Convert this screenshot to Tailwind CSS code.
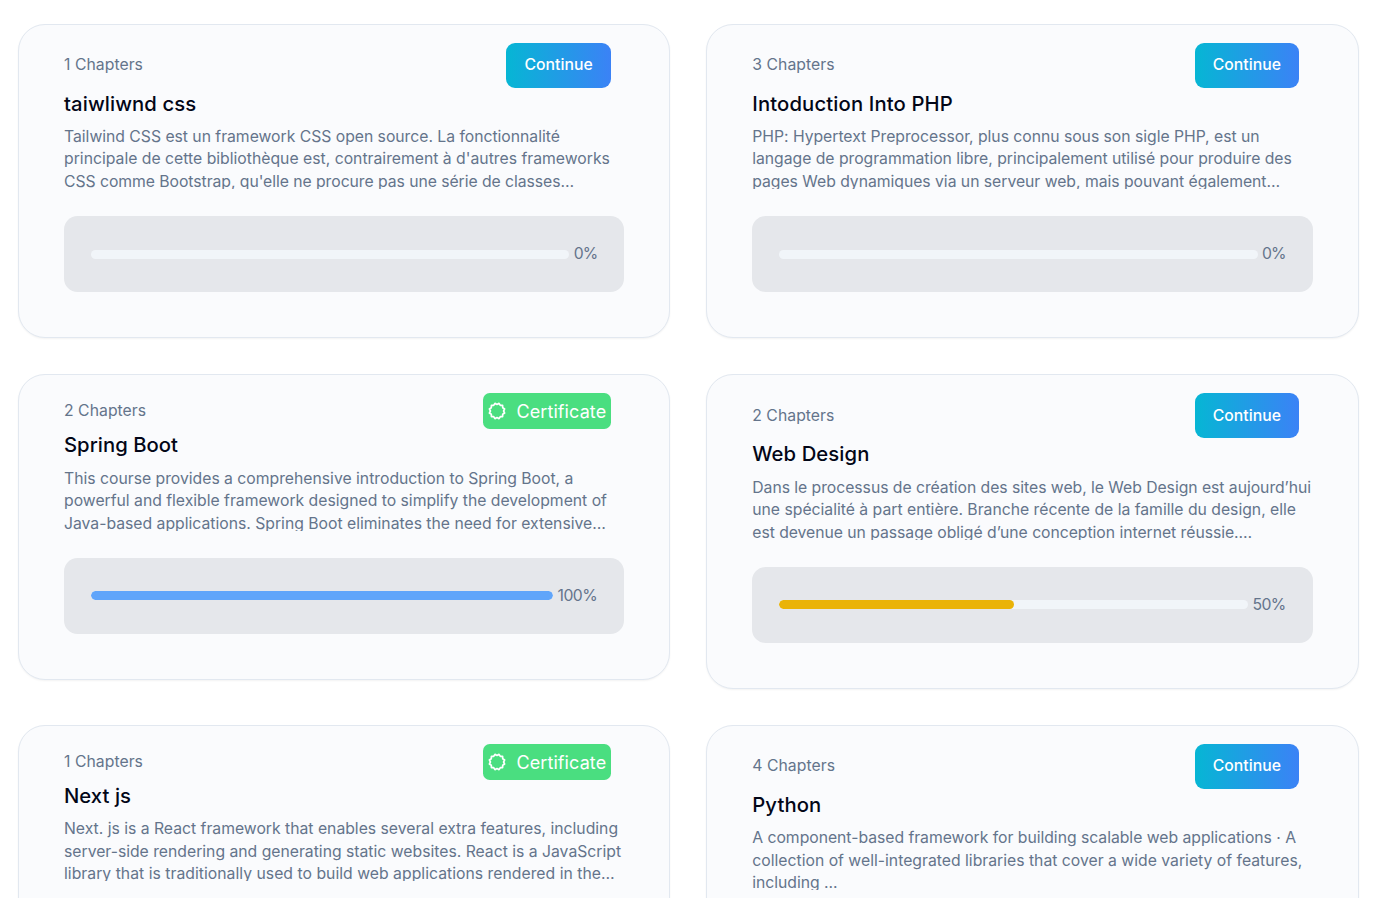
<!DOCTYPE html>
<html lang="en" class="text-[18px]">
<head>
<meta charset="utf-8">
<title>Courses</title>
<script src="https://cdn.jsdelivr.net/npm/@tailwindcss/browser@4"></script>
</head>
<body class="bg-white font-['Inter',sans-serif] overflow-hidden h-screen">
<main class="grid grid-cols-2 items-start gap-[36px] pl-[18px] pt-[23.6px] w-[1358.5px]">

  <article class="rounded-3xl border border-[#e2e8f0] bg-[#fafbfd] px-10 pt-4 pb-10 shadow-[0_1px_2px_rgba(0,0,0,0.05)]">
    <div class="flex items-center justify-between pr-3">
      <span class="text-sm leading-5 tracking-[0.04px] text-[#64748b]">1 Chapters</span>
      <button class="rounded-lg bg-linear-to-r/srgb from-[#06b6d4] to-[#3b82f6] px-4 py-2.5 text-sm leading-5 font-medium tracking-[0.03px] text-white">Continue</button>
    </div>
    <h2 class="text-lg leading-7 font-medium tracking-[0.1px] text-[#020617]">taiwliwnd css</h2>
    <p class="mt-1.5 mb-6 h-14 overflow-hidden text-sm leading-5 tracking-[-0.025px] text-[#64748b] whitespace-nowrap">Tailwind CSS est un framework CSS open source. La fonctionnalité<br><span class="tracking-[0px]">principale de cette bibliothèque est, contrairement à d'autres frameworks</span><br><span class="tracking-[-0.05px]">CSS comme Bootstrap, qu'elle ne procure pas une série de classes…</span></p>
    <div class="flex items-center gap-1 rounded-xl bg-[#e5e7eb] p-6">
      <div class="h-2 grow overflow-hidden rounded-full bg-[#f1f5f9]"></div>
      <span class="text-sm leading-5 tracking-[-1px] text-[#64748b]">0%</span>
    </div>
  </article>

  <article class="rounded-3xl border border-[#e2e8f0] bg-[#fafbfd] px-10 pt-4 pb-10 shadow-[0_1px_2px_rgba(0,0,0,0.05)]">
    <div class="flex items-center justify-between pr-3">
      <span class="text-sm leading-5 tracking-[0.04px] text-[#64748b]">3 Chapters</span>
      <button class="rounded-lg bg-linear-to-r/srgb from-[#06b6d4] to-[#3b82f6] px-4 py-2.5 text-sm leading-5 font-medium tracking-[0.03px] text-white">Continue</button>
    </div>
    <h2 class="text-lg leading-7 font-medium tracking-[0.14px] text-[#020617]">Intoduction Into PHP</h2>
    <p class="mt-1.5 mb-6 h-14 overflow-hidden text-sm leading-5 tracking-[-0.03px] text-[#64748b] whitespace-nowrap">PHP: Hypertext Preprocessor, plus connu sous son sigle PHP, est un<br>langage de programmation libre, principalement utilisé pour produire des<br>pages Web dynamiques via un serveur web, mais pouvant également…</p>
    <div class="flex items-center gap-1 rounded-xl bg-[#e5e7eb] p-6">
      <div class="h-2 grow overflow-hidden rounded-full bg-[#f1f5f9]"></div>
      <span class="text-sm leading-5 tracking-[-1px] text-[#64748b]">0%</span>
    </div>
  </article>

  <article class="rounded-3xl border border-[#e2e8f0] bg-[#fafbfd] px-10 pt-4 pb-10 shadow-[0_1px_2px_rgba(0,0,0,0.05)]">
    <div class="flex items-center justify-between pr-3">
      <span class="text-sm leading-5 tracking-[0.04px] text-[#64748b]">2 Chapters</span>
      <button class="flex items-center gap-2 rounded-md bg-[#4ade80] p-1 text-base leading-6 tracking-[0.1px] text-white">
        <svg class="size-[20px] shrink-0" viewBox="0 0 20 20" fill="none" stroke="currentColor" stroke-width="1.7" stroke-linejoin="round"><path d="M10 3.4 12.04 2.37 13.3 4.28 15.59 4.41 15.72 6.7 17.63 7.96 16.6 10 17.63 12.04 15.72 13.3 15.59 15.59 13.3 15.72 12.04 17.63 10 16.6 7.96 17.63 6.7 15.72 4.41 15.59 4.28 13.3 2.37 12.04 3.4 10 2.37 7.96 4.28 6.7 4.41 4.41 6.7 4.28 7.96 2.37Z"/></svg>
        <span>Certificate</span>
      </button>
    </div>
    <h2 class="text-lg leading-7 font-medium tracking-[0.04px] text-[#020617]">Spring Boot</h2>
    <p class="mt-1.5 mb-6 h-14 overflow-hidden text-sm leading-5 tracking-[-0.01px] text-[#64748b] whitespace-nowrap">This course provides a comprehensive introduction to Spring Boot, a<br>powerful and flexible framework designed to simplify the development of<br>Java-based applications. Spring Boot eliminates the need for extensive…</p>
    <div class="flex items-center gap-1 rounded-xl bg-[#e5e7eb] p-6">
      <div class="h-2 grow overflow-hidden rounded-full bg-[#f1f5f9]"><div class="h-full rounded-full bg-[#60a5fa]" style="width:100%"></div></div>
      <span class="text-sm leading-5 tracking-[-0.5px] text-[#64748b]">100%</span>
    </div>
  </article>

  <article class="rounded-3xl border border-[#e2e8f0] bg-[#fafbfd] px-10 pt-4 pb-10 shadow-[0_1px_2px_rgba(0,0,0,0.05)]">
    <div class="flex items-center justify-between pr-3">
      <span class="text-sm leading-5 tracking-[0.04px] text-[#64748b]">2 Chapters</span>
      <button class="rounded-lg bg-linear-to-r/srgb from-[#06b6d4] to-[#3b82f6] px-4 py-2.5 text-sm leading-5 font-medium tracking-[0.03px] text-white">Continue</button>
    </div>
    <h2 class="text-lg leading-7 font-medium tracking-[0.08px] text-[#020617]">Web Design</h2>
    <p class="mt-1.5 mb-6 h-14 overflow-hidden text-sm leading-5 tracking-[-0.04px] text-[#64748b] whitespace-nowrap">Dans le processus de création des sites web, le Web Design est aujourd’hui<br><span class="tracking-[-0.01px]">une spécialité à part entière. Branche récente de la famille du design, elle</span><br>est devenue un passage obligé d’une conception internet réussie.…</p>
    <div class="flex items-center gap-1 rounded-xl bg-[#e5e7eb] p-6">
      <div class="h-2 grow overflow-hidden rounded-full bg-[#f1f5f9]"><div class="h-full rounded-full bg-[#eab308]" style="width:50%"></div></div>
      <span class="text-sm leading-5 tracking-[-0.7px] text-[#64748b]">50%</span>
    </div>
  </article>

  <article class="rounded-3xl border border-[#e2e8f0] bg-[#fafbfd] px-10 pt-4 pb-10 shadow-[0_1px_2px_rgba(0,0,0,0.05)]">
    <div class="flex items-center justify-between pr-3">
      <span class="text-sm leading-5 tracking-[0.04px] text-[#64748b]">1 Chapters</span>
      <button class="flex items-center gap-2 rounded-md bg-[#4ade80] p-1 text-base leading-6 tracking-[0.1px] text-white">
        <svg class="size-[20px] shrink-0" viewBox="0 0 20 20" fill="none" stroke="currentColor" stroke-width="1.7" stroke-linejoin="round"><path d="M10 3.4 12.04 2.37 13.3 4.28 15.59 4.41 15.72 6.7 17.63 7.96 16.6 10 17.63 12.04 15.72 13.3 15.59 15.59 13.3 15.72 12.04 17.63 10 16.6 7.96 17.63 6.7 15.72 4.41 15.59 4.28 13.3 2.37 12.04 3.4 10 2.37 7.96 4.28 6.7 4.41 4.41 6.7 4.28 7.96 2.37Z"/></svg>
        <span>Certificate</span>
      </button>
    </div>
    <h2 class="text-lg leading-7 font-medium tracking-[0.04px] text-[#020617]">Next js</h2>
    <p class="mt-1.5 mb-6 h-14 overflow-hidden text-sm leading-5 tracking-[-0.01px] text-[#64748b] whitespace-nowrap">Next. js is a React framework that enables several extra features, including<br>server-side rendering and generating static websites. React is a JavaScript<br><span class="tracking-[0.02px]">library that is traditionally used to build web applications rendered in the…</span></p>
  </article>

  <article class="rounded-3xl border border-[#e2e8f0] bg-[#fafbfd] px-10 pt-4 pb-10 shadow-[0_1px_2px_rgba(0,0,0,0.05)]">
    <div class="flex items-center justify-between pr-3">
      <span class="text-sm leading-5 tracking-[0.04px] text-[#64748b]">4 Chapters</span>
      <button class="rounded-lg bg-linear-to-r/srgb from-[#06b6d4] to-[#3b82f6] px-4 py-2.5 text-sm leading-5 font-medium tracking-[0.03px] text-white">Continue</button>
    </div>
    <h2 class="text-lg leading-7 font-medium tracking-[0.1px] text-[#020617]">Python</h2>
    <p class="mt-1.5 mb-6 h-14 overflow-hidden text-sm leading-5 tracking-[-0.03px] text-[#64748b] whitespace-nowrap">A component-based framework for building scalable web applications · A<br><span class="tracking-[0px]">collection of well-integrated libraries that cover a wide variety of features,</span><br>including ...</p>
  </article>

</main>
</body>
</html>
